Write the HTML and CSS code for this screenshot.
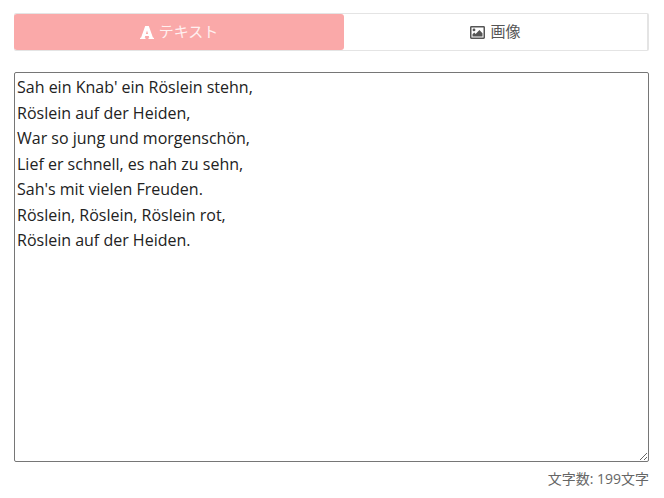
FILE: index.html
```html
<!DOCTYPE html>
<html lang="ja">
<head>
    <meta charset="UTF-8">
    <title>テキスト</title>
    <link rel="stylesheet" href="styles.css">
</head>
<body>
    <div class="tabs">
        <div class="tab active">
            <svg class="tab-icon icon-font" viewBox="0 0 14 13"><path fill="currentColor" fill-rule="evenodd" d="M0 13V11.800H1L5.200 0H8.800L13 11.800H14V13H8.500V11.800H9.300L8.800 10H5.200L4.700 11.800H5.500V13ZM5.900 8H8.100L7 4.500Z"/></svg>
            <span class="tab-label">テキスト</span>
        </div>
        <div class="tab">
            <svg class="tab-icon icon-image" viewBox="0 0 15 13"><path fill="currentColor" fill-rule="evenodd" d="M1.400 0H13.600C14.400 0 15 .6 15 1.400V11.600C15 12.400 14.400 13 13.600 13H1.400C.6 13 0 12.400 0 11.600V1.400C0 .6 .6 0 1.400 0ZM1.500 1.500V11.500H13.500V1.500ZM4 2.500A1.400 1.400 0 1 1 4 5.300A1.400 1.400 0 1 1 4 2.500ZM2.500 10.500V8.200L4.200 6.600L5.600 8L9.400 3.900L12.500 7.200V10.500Z"/></svg>
            <span class="tab-label">画像</span>
        </div>
    </div>

    <textarea class="editor" spellcheck="false">Sah ein Knab' ein Röslein stehn,
Röslein auf der Heiden,
War so jung und morgenschön,
Lief er schnell, es nah zu sehn,
Sah's mit vielen Freuden.
Röslein, Röslein, Röslein rot,
Röslein auf der Heiden.</textarea>

    <div class="counter">文字数: 199文字</div>
</body>
</html>
```

FILE: styles.css
```css
* {
    box-sizing: border-box;
}

body {
    margin: 0;
    padding: 13px 15px 0 14px;
    font-family: "Open Sans", "Noto Sans CJK JP", sans-serif;
    background: white;
    color: #555;
}

.tabs {
    display: flex;
    height: 38px;
    border: 1px solid #e4e4e4;
    border-right-width: 2px;
    border-radius: 2px;
    background: white;
}

.tab {
    flex: 1;
    display: flex;
    align-items: center;
    justify-content: center;
    gap: 5px;
    font-size: 15px;
    color: #555;
}

.tab.active {
    flex: 0 0 330px;
    margin-left: -1px;
    border-radius: 3px;
    background: #faa9a9;
    color: #fff0f0;
}

.tab-label {
    padding-bottom: 3px;
}

.tab-icon {
    display: block;
    flex: none;
}

.icon-font {
    width: 14px;
    height: 13px;
    color: white;
}

.icon-image {
    width: 15px;
    height: 13px;
}

.editor {
    display: block;
    width: 100%;
    height: 390px;
    margin-top: 21px;
    padding: 2px;
    border: 1px solid #767676;
    border-radius: 2px;
    outline: none;
    font-family: "Open Sans", "Noto Sans CJK JP", sans-serif;
    font-size: 16px;
    line-height: 25.5px;
    color: #222;
}

.counter {
    margin-top: 8px;
    text-align: right;
    font-size: 14px;
    line-height: 18px;
    color: #666;
}
```
